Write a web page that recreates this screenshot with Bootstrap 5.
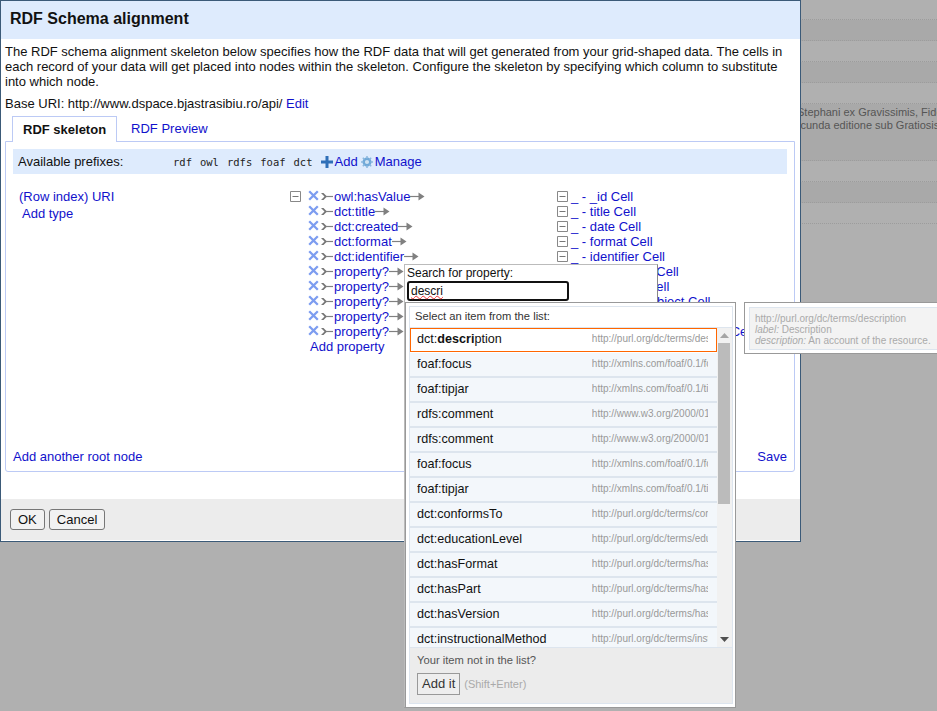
<!DOCTYPE html>
<html lang="en">
<head>
  <meta charset="UTF-8">
  <meta name="viewport" content="width=device-width, initial-scale=1.0">
  <title>RDF Schema alignment</title>
  <link rel="stylesheet" href="https://cdn.jsdelivr.net/npm/bootstrap@5.3.0/dist/css/bootstrap.min.css">
  <style>
    html, body { height: 100%; }
    body { position: relative; overflow: hidden; background: #b0b0b0; color: #111; font: 13px/15px "Liberation Sans", Arial, sans-serif; }
    a { color: #11c; text-decoration: none; }

    /* dimmed grid behind the dialog */
    .grid-row { height: 21px; border-bottom: 1px dotted #9c9c9c; white-space: nowrap; overflow: hidden; color: #555; font-size: 11px; line-height: 13px; }
    .grid-row.first { height: 20px; }
    .grid-row.shade { background: #a9a9a9; }
    .grid-row.tall { height: 57px; padding-top: 2px; }
    .grid-line1 { padding-left: 797px; }
    .grid-line2 { padding-left: 787px; }

    .dialog { position: absolute; left: 0; top: 0; width: 801px; height: 542px; background: #fff; border: 1px solid #3b5a78; }
    .dialog-head { height: 38px; padding: 0 9px; background: #deebfd; font-size: 16px; font-weight: 700; line-height: 36px; }
    .dialog-body { height: 460px; padding: 5px 4px 0; }
    .dialog-body p { margin: 0; }
    .base-uri { margin-top: 7px !important; }
    .dialog-foot { height: 41px; padding: 10px 9px; background: #ececec; }
    .dlg-btn { height: 21px; padding: 0 7px; font-size: 13px; line-height: 19px; color: #111; background: #f2f2f2; border: 1px solid #777; border-radius: 3px; }

    .rdf-tabs { margin-top: 5px; padding-left: 7px; border-bottom: 0; height: 25px; }
    .rdf-tabs .nav-link { height: 26px; padding: 5px 10px 0 14px; font-size: 13px; line-height: 15px; color: #11c; border: 0; border-radius: 0; }
    .rdf-tabs .nav-link.active { position: relative; z-index: 1; padding: 5px 10px 0; font-weight: 700; color: #111; background: #fff; border: 1px solid #bccaf5; border-bottom: 0; }
    .tab-box { height: 331px; margin-right: 1px; padding: 7px 7px 7px; border: 1px solid #bccaf5; border-radius: 0 0 3px 3px; }
    .prefix-bar { height: 25px; padding-left: 5px; background: #deebfd; }
    .prefix-label { width: 155px; }
    .prefix-code { margin-right: 8px; font: 10.5px/12px "DejaVu Sans Mono", monospace; color: #222; }
    .prefix-bar svg { flex: none; }
    .prefix-link { margin: 0 3px 0 2px; }

    .skeleton { height: 275px; padding-top: 15px; }
    .root-col { width: 277px; margin-top: -1px; padding-left: 6px; }
    .root-col a { display: block; line-height: 17px; }
    .root-col a + a { padding-left: 3px; }
    .tree-col { width: 267px; }
    .box-col { width: 18px; padding-top: 2px; }
    .node-row { height: 15px; white-space: nowrap; }
    .node-x { margin: -2px 2px 0 0; }
    .node-in { margin-right: 1px; }
    .add-prop { padding-left: 2px; height: 15px; display: block; }
    .target-col { white-space: nowrap; }
    .target-col .node-row svg { margin-right: 3px; }

    .search-pop { position: absolute; left: 404px; top: 264px; width: 254px; height: 444px; padding: 1px 2px; background: #fff; border: 1px solid #bbb; border-bottom-color: #888; border-right-color: #888; font-size: 12px; }
    .search-input { width: 162px; height: 20px; padding: 0 2px; font-size: 12px; line-height: 16px; color: #111; border: 2px solid #111; border-radius: 3px; outline: 0; }
    .typo { text-decoration: underline wavy #e33 1px; text-underline-offset: 0; }

    .suggest-pane { position: absolute; left: 405px; top: 302px; width: 331px; height: 406px; padding: 3px 2px 3px 3px; background: #fff; border: 1px solid #999; }
    .suggest-inner { height: 398px; border: 1px solid #dde5ee; }
    .suggest-status { height: 21px; padding: 2px 5px 0; font-size: 11.2px; line-height: 15px; color: #333; border-bottom: 1px solid #dde5ee; }
    .suggest-body { height: 319px; }
    .suggest-list { width: 309px; height: 319px; overflow: hidden; }
    .suggest-item { height: 25px; padding: 0 9px 0 7px; background: #f3f7fb; border-bottom: 2px solid #dde5ee; white-space: nowrap; font-size: 12.6px; line-height: 22px; }
    .suggest-item.current { height: 24px; background: #fff; border: 1px solid #f60; margin-bottom: 1px; line-height: 20px; padding-left: 6px; padding-right: 8px; }
    .item-name { width: 176px; overflow: hidden; }
    .item-url { width: 117px; overflow: hidden; font-size: 10px; color: #999; }
    .fake-scroll { width: 15px; background: #f1f1f1; }
    .scroll-btn { height: 15px; }
    .scroll-thumb { height: 161px; margin-left: 1px; width: 12px; background: #bbb; }
    .suggest-foot { height: 56px; padding: 5px 7px; background: #ececec; border-top: 1px solid #dde5ee; font-size: 11.2px; color: #555; }
    .add-row { margin-top: 5px; }
    .add-it { height: 22px; padding: 0 4px; font-size: 13px; line-height: 20px; color: #333; background: #eee; border: 1px solid #999; border-radius: 0; }
    .shift-hint { margin-left: 4px; font-size: 11px; color: #aaa; }

    .hint-pop { position: absolute; left: 744px; top: 302px; width: 200px; height: 52px; padding: 4px; background: #fff; border: 1px solid #999; }
    .hint-inner { height: 43px; padding: 5px 5px; background: #f3f3f3; border: 1px solid #dde5ee; font-size: 10px; line-height: 11px; color: #aaa; white-space: nowrap; }
  </style>
</head>
<body>
  <svg width="0" height="0" class="d-block">
    <defs>
      <symbol id="ico-x" viewBox="0 0 11 11"><path d="M1.200 1.200l8.600 8.600M9.800 1.200l-8.600 8.600" stroke="#7d9df0" stroke-width="2.300" fill="none"/></symbol>
      <symbol id="ico-in" viewBox="0 0 12 11"><path d="M0 2h2.500l3.500 3.500L2.500 9H0l3.500-3.500z" fill="#777"/><path d="M5 5.500h7" stroke="#808080" stroke-width="1.200"/></symbol>
      <symbol id="ico-out" viewBox="0 0 15 11"><path d="M0 5.500h9" stroke="#808080" stroke-width="1.200"/><path d="M8.500 1.500l6 4-6 4z" fill="#808080"/></symbol>
      <symbol id="ico-box" viewBox="0 0 11 11"><path d="M.5.5h10v10H.5z" fill="#fff" stroke="#888"/><path d="M2.500 5.500h6" stroke="#777"/></symbol>
    </defs>
  </svg>

  <!-- grid behind the dialog -->
  <div class="grid-row first"></div>
  <div class="grid-row shade"></div>
  <div class="grid-row"></div>
  <div class="grid-row shade"></div>
  <div class="grid-row"></div>
  <div class="grid-row tall shade">
    <div class="grid-line1">Stephani ex Gravissimis, Fidei</div>
    <div class="grid-line2">Secunda editione sub Gratiosis</div>
  </div>
  <div class="grid-row"></div>
  <div class="grid-row shade"></div>
  <div class="grid-row"></div>

  <div class="dialog">
    <div class="dialog-head">RDF Schema alignment</div>
    <div class="dialog-body">
      <p>The RDF schema alignment skeleton below specifies how the RDF data that will get generated from your grid-shaped data. The cells in each record of your data will get placed into nodes within the skeleton. Configure the skeleton by specifying which column to substitute into which node.</p>
      <p class="base-uri">Base URI: http://www.dspace.bjastrasibiu.ro/api/ <a href="#">Edit</a></p>

      <ul class="nav nav-tabs rdf-tabs">
        <li class="nav-item"><a class="nav-link active" href="#">RDF skeleton</a></li>
        <li class="nav-item"><a class="nav-link" href="#">RDF Preview</a></li>
      </ul>
      <div class="tab-box">
        <div class="prefix-bar d-flex align-items-center">
          <span class="prefix-label">Available prefixes:</span>
          <span class="prefix-code">rdf</span>
          <span class="prefix-code">owl</span>
          <span class="prefix-code">rdfs</span>
          <span class="prefix-code">foaf</span>
          <span class="prefix-code">dct</span>
          <svg width="12" height="12" viewBox="0 0 12 12"><path d="M4.500 0h3v4.500H12v3H7.500V12h-3V7.500H0v-3h4.500z" fill="#2f6fb7"/></svg>
          <a href="#" class="prefix-link">Add</a>
          <svg width="12" height="12" viewBox="0 0 12 12"><circle cx="6" cy="6" r="3.300" fill="#cfe2f2" stroke="#6fa8d8" stroke-width="2.400"/><path d="M6 0v2.400M6 9.600V12M0 6h2.400M9.600 6H12M1.800 1.800l1.700 1.700M8.500 8.500l1.700 1.700M10.200 1.800L8.500 3.500M3.500 8.500l-1.700 1.700" stroke="#8ab8de" stroke-width="1.500"/></svg>
          <a href="#" class="prefix-link">Manage</a>
        </div>

        <div class="skeleton d-flex">
          <div class="root-col">
            <a href="#">(Row index) URI</a>
            <a href="#">Add type</a>
          </div>
          <div class="tree-col d-flex">
            <div class="box-col"><svg width="11" height="11" class="d-block"><use href="#ico-box"/></svg></div>
            <div>
              <div class="node-row d-flex align-items-center"><svg class="node-x" width="11" height="11"><use href="#ico-x"/></svg><svg class="node-in" width="12" height="11"><use href="#ico-in"/></svg><a href="#">owl:hasValue</a><svg width="15" height="11"><use href="#ico-out"/></svg></div>
              <div class="node-row d-flex align-items-center"><svg class="node-x" width="11" height="11"><use href="#ico-x"/></svg><svg class="node-in" width="12" height="11"><use href="#ico-in"/></svg><a href="#">dct:title</a><svg width="15" height="11"><use href="#ico-out"/></svg></div>
              <div class="node-row d-flex align-items-center"><svg class="node-x" width="11" height="11"><use href="#ico-x"/></svg><svg class="node-in" width="12" height="11"><use href="#ico-in"/></svg><a href="#">dct:created</a><svg width="15" height="11"><use href="#ico-out"/></svg></div>
              <div class="node-row d-flex align-items-center"><svg class="node-x" width="11" height="11"><use href="#ico-x"/></svg><svg class="node-in" width="12" height="11"><use href="#ico-in"/></svg><a href="#">dct:format</a><svg width="15" height="11"><use href="#ico-out"/></svg></div>
              <div class="node-row d-flex align-items-center"><svg class="node-x" width="11" height="11"><use href="#ico-x"/></svg><svg class="node-in" width="12" height="11"><use href="#ico-in"/></svg><a href="#">dct:identifier</a><svg width="15" height="11"><use href="#ico-out"/></svg></div>
              <div class="node-row d-flex align-items-center"><svg class="node-x" width="11" height="11"><use href="#ico-x"/></svg><svg class="node-in" width="12" height="11"><use href="#ico-in"/></svg><a href="#">property?</a><svg width="15" height="11"><use href="#ico-out"/></svg></div>
              <div class="node-row d-flex align-items-center"><svg class="node-x" width="11" height="11"><use href="#ico-x"/></svg><svg class="node-in" width="12" height="11"><use href="#ico-in"/></svg><a href="#">property?</a><svg width="15" height="11"><use href="#ico-out"/></svg></div>
              <div class="node-row d-flex align-items-center"><svg class="node-x" width="11" height="11"><use href="#ico-x"/></svg><svg class="node-in" width="12" height="11"><use href="#ico-in"/></svg><a href="#">property?</a><svg width="15" height="11"><use href="#ico-out"/></svg></div>
              <div class="node-row d-flex align-items-center"><svg class="node-x" width="11" height="11"><use href="#ico-x"/></svg><svg class="node-in" width="12" height="11"><use href="#ico-in"/></svg><a href="#">property?</a><svg width="15" height="11"><use href="#ico-out"/></svg></div>
              <div class="node-row d-flex align-items-center"><svg class="node-x" width="11" height="11"><use href="#ico-x"/></svg><svg class="node-in" width="12" height="11"><use href="#ico-in"/></svg><a href="#">property?</a><svg width="15" height="11"><use href="#ico-out"/></svg></div>
              <a href="#" class="add-prop">Add property</a>
            </div>
          </div>
          <div class="target-col">
            <div class="node-row d-flex align-items-center"><svg width="11" height="11"><use href="#ico-box"/></svg><a href="#">_ - _id Cell</a></div>
            <div class="node-row d-flex align-items-center"><svg width="11" height="11"><use href="#ico-box"/></svg><a href="#">_ - title Cell</a></div>
            <div class="node-row d-flex align-items-center"><svg width="11" height="11"><use href="#ico-box"/></svg><a href="#">_ - date Cell</a></div>
            <div class="node-row d-flex align-items-center"><svg width="11" height="11"><use href="#ico-box"/></svg><a href="#">_ - format Cell</a></div>
            <div class="node-row d-flex align-items-center"><svg width="11" height="11"><use href="#ico-box"/></svg><a href="#">_ - identifier Cell</a></div>
            <div class="node-row d-flex align-items-center"><svg width="11" height="11"><use href="#ico-box"/></svg><a href="#">_ - description Cell</a></div>
            <div class="node-row d-flex align-items-center"><svg width="11" height="11"><use href="#ico-box"/></svg><a href="#">_ - language Cell</a></div>
            <div class="node-row d-flex align-items-center"><svg width="11" height="11"><use href="#ico-box"/></svg><a href="#">_ - category subject Cell</a></div>
            <div class="node-row d-flex align-items-center"><svg width="11" height="11"><use href="#ico-box"/></svg><a href="#">_ - creator Cell</a></div>
            <div class="node-row d-flex align-items-center"><svg width="11" height="11"><use href="#ico-box"/></svg><a href="#">_ - description abstract text Cell</a></div>
          </div>
        </div>

        <div class="d-flex justify-content-between">
          <a href="#">Add another root node</a>
          <a href="#">Save</a>
        </div>
      </div>
    </div>
    <div class="dialog-foot d-flex gap-1">
      <button type="button" class="btn dlg-btn">OK</button>
      <button type="button" class="btn dlg-btn">Cancel</button>
    </div>
  </div>

  <!-- property search box -->
  <div class="search-pop">
    <div>Search for property:</div>
    <div class="search-input" contenteditable="true" spellcheck="false"><span class="typo">descri</span></div>
  </div>

  <!-- suggestion list -->
  <div class="suggest-pane">
    <div class="suggest-inner">
      <div class="suggest-status">Select an item from the list:</div>
      <div class="suggest-body d-flex">
        <div class="suggest-list">
          <div class="suggest-item current d-flex"><span class="item-name">dct:<b>descri</b>ption</span><span class="item-url">http://purl.org/dc/terms/description</span></div>
          <div class="suggest-item d-flex"><span class="item-name">foaf:focus</span><span class="item-url">http://xmlns.com/foaf/0.1/focus</span></div>
          <div class="suggest-item d-flex"><span class="item-name">foaf:tipjar</span><span class="item-url">http://xmlns.com/foaf/0.1/tipjar</span></div>
          <div class="suggest-item d-flex"><span class="item-name">rdfs:comment</span><span class="item-url">http://www.w3.org/2000/01/rdf-schema</span></div>
          <div class="suggest-item d-flex"><span class="item-name">rdfs:comment</span><span class="item-url">http://www.w3.org/2000/01/rdf-schema</span></div>
          <div class="suggest-item d-flex"><span class="item-name">foaf:focus</span><span class="item-url">http://xmlns.com/foaf/0.1/focus</span></div>
          <div class="suggest-item d-flex"><span class="item-name">foaf:tipjar</span><span class="item-url">http://xmlns.com/foaf/0.1/tipjar</span></div>
          <div class="suggest-item d-flex"><span class="item-name">dct:conformsTo</span><span class="item-url">http://purl.org/dc/terms/conformsTo</span></div>
          <div class="suggest-item d-flex"><span class="item-name">dct:educationLevel</span><span class="item-url">http://purl.org/dc/terms/educationLevel</span></div>
          <div class="suggest-item d-flex"><span class="item-name">dct:hasFormat</span><span class="item-url">http://purl.org/dc/terms/hasFormat</span></div>
          <div class="suggest-item d-flex"><span class="item-name">dct:hasPart</span><span class="item-url">http://purl.org/dc/terms/hasPart</span></div>
          <div class="suggest-item d-flex"><span class="item-name">dct:hasVersion</span><span class="item-url">http://purl.org/dc/terms/hasVersion</span></div>
          <div class="suggest-item d-flex"><span class="item-name">dct:instructionalMethod</span><span class="item-url">http://purl.org/dc/terms/instructionalMethod</span></div>
        </div>
        <div class="fake-scroll d-flex flex-column">
          <div class="scroll-btn d-flex align-items-center justify-content-center"><svg width="9" height="5" viewBox="0 0 9 5"><path d="M4.500 0L9 5H0z" fill="#a5a5a5"/></svg></div>
          <div class="scroll-thumb"></div>
          <div class="flex-grow-1"></div>
          <div class="scroll-btn d-flex align-items-center justify-content-center"><svg width="9" height="5" viewBox="0 0 9 5"><path d="M0 0h9L4.500 5z" fill="#505050"/></svg></div>
        </div>
      </div>
      <div class="suggest-foot">
        <div>Your item not in the list?</div>
        <div class="add-row d-flex align-items-center">
          <button type="button" class="btn add-it">Add it</button>
          <span class="shift-hint">(Shift+Enter)</span>
        </div>
      </div>
    </div>
  </div>

  <!-- flyout for the highlighted item -->
  <div class="hint-pop">
    <div class="hint-inner">
      <div>http://purl.org/dc/terms/description</div>
      <div><i>label:</i> Description</div>
      <div><i>description:</i> An account of the resource.</div>
    </div>
  </div>

  <script src="https://cdn.jsdelivr.net/npm/bootstrap@5.3.0/dist/js/bootstrap.bundle.min.js"></script>
</body>
</html>
